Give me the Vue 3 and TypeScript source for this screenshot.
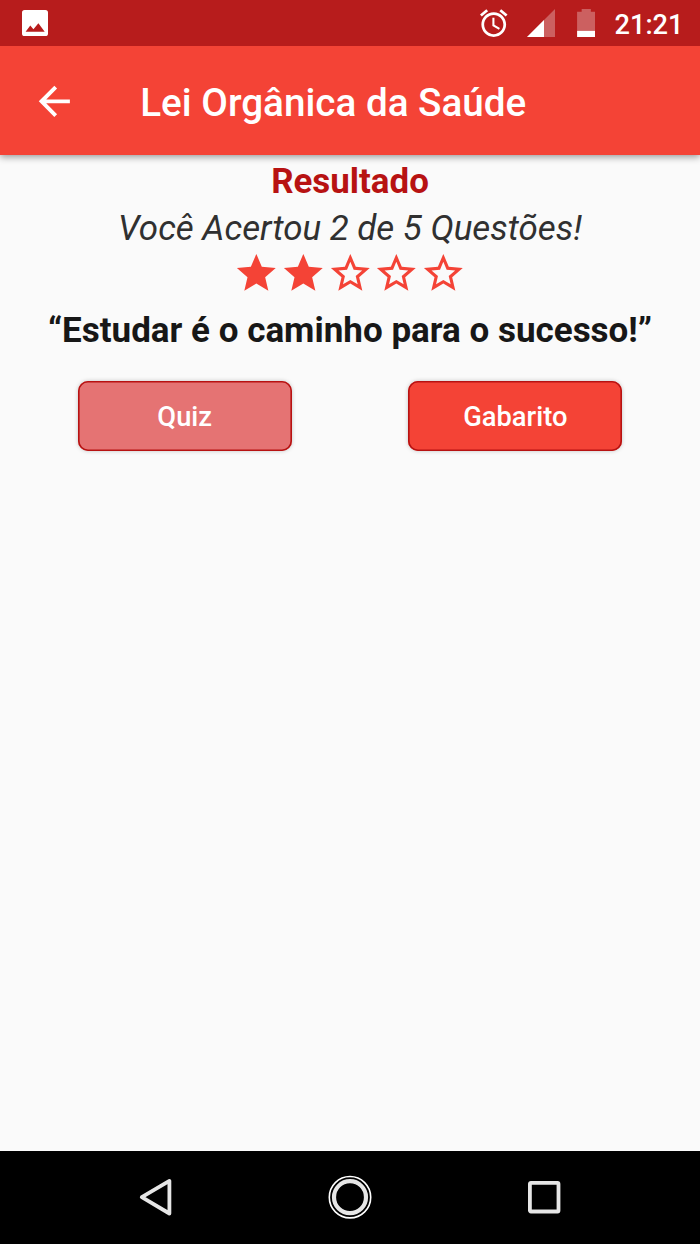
<script setup lang="ts">
const total = 5
const correct = 2
const stars: boolean[] = Array.from({ length: total }, (_, i) => i < correct)
</script>

<template>
  <div class="screen">
    <header class="status">
      <svg class="picture" viewBox="0 0 26 26">
        <rect width="26" height="26" rx="2.6" fill="#fff" />
        <path d="M3.6 21.8L8.3 15.6L11.4 19.2L16.4 13.2L22.7 21.8Z" fill="#b71c1c" />
      </svg>
      <div class="status-right">
        <svg class="alarm" viewBox="2 1.8 20 20.2">
          <path fill="#fff" d="M22 5.72l-4.6-3.86-1.29 1.53 4.6 3.86L22 5.72zM7.88 3.39L6.6 1.86 2 5.71l1.29 1.53 4.59-3.85zM12.5 8H11v6l4.75 2.85.75-1.23-4-2.37V8zM12 4c-4.97 0-9 4.03-9 9s4.02 9 9 9c4.97 0 9-4.03 9-9s-4.03-9-9-9zm0 16c-3.87 0-7-3.13-7-7s3.13-7 7-7 7 3.13 7 7-3.13 7-7 7z" />
        </svg>
        <svg class="signal" viewBox="0 0 28 28">
          <path d="M0 28L28 0V28Z" fill="#fff" fill-opacity=".3" />
          <path d="M0 28L17 11V28Z" fill="#fff" />
        </svg>
        <svg class="battery" viewBox="0 0 18 28">
          <path d="M0 2.6H4.5V0H13.5V2.6H18V21.5H0Z" fill="#fff" fill-opacity=".3" />
          <path d="M0 21.5H18V28H0Z" fill="#fff" />
        </svg>
        <span class="clock">21:21</span>
      </div>
    </header>

    <div class="appbar">
      <svg class="back" viewBox="0 0 24 24">
        <path fill="#fff" d="M20 11H7.83l5.59-5.59L12 4l-8 8 8 8 1.41-1.41L7.83 13H20v-2z" />
      </svg>
      <h1 class="title">Lei Orgânica da Saúde</h1>
    </div>

    <main class="content">
      <h2 class="result">Resultado</h2>
      <p class="score">Você Acertou {{ correct }} de {{ total }} Questões!</p>
      <div class="stars">
        <svg v-for="(full, i) in stars" :key="i" class="star" viewBox="0 0 24 24">
          <path v-if="full" fill="#f44336" d="M12 17.27L18.18 21l-1.64-7.03L22 9.24l-7.19-.61L12 2 9.19 8.63 2 9.24l5.46 4.73L5.82 21z" />
          <path v-else fill="#f44336" d="M22 9.24l-7.19-.62L12 2 9.19 8.63 2 9.24l5.46 4.73L5.82 21 12 17.27 18.18 21l-1.63-7.03L22 9.24zM12 15.4l-3.76 2.27 1-4.28-3.32-2.88 4.38-.38L12 6.1l1.71 4.04 4.38.38-3.32 2.88 1 4.28L12 15.4z" />
        </svg>
      </div>
      <p class="quote">“Estudar é o caminho para o sucesso!”</p>
      <div class="actions">
        <button class="btn muted" type="button">Quiz</button>
        <button class="btn" type="button">Gabarito</button>
      </div>
    </main>

    <nav class="navbar">
      <svg class="nav-icon" viewBox="0 0 46 46">
        <path d="M8.8 23.2L36.4 6.9V39.5Z" fill="none" stroke="#e6e6e6" stroke-width="3.8" stroke-linejoin="round" />
      </svg>
      <svg class="nav-icon" viewBox="0 0 46 46">
        <circle cx="23" cy="23.2" r="20.7" fill="none" stroke="#fff" stroke-width="1.6" />
        <circle cx="23" cy="23.2" r="16" fill="none" stroke="#e6e6e6" stroke-width="4.2" />
      </svg>
      <svg class="nav-icon" viewBox="0 0 46 46">
        <rect x="8.9" y="8.9" width="28.6" height="28.6" rx="1" fill="none" stroke="#e6e6e6" stroke-width="3.8" />
      </svg>
    </nav>
  </div>
</template>

<style>
body {
  margin: 0;
}
</style>

<style scoped>
.screen {
  width: 700px;
  height: 1244px;
  display: flex;
  flex-direction: column;
  overflow: hidden;
  background: #fafafa;
  font-family: Roboto, "Liberation Sans", sans-serif;
}
h1, h2, p {
  margin: 0;
}
svg {
  display: block;
  flex: none;
}
.status {
  position: relative;
  z-index: 1;
  height: 46.4px;
  flex: none;
  display: flex;
  justify-content: space-between;
  align-items: center;
  box-sizing: border-box;
  padding: 0 16.5px 0 22px;
  background: #b71c1c;
}
.picture {
  width: 26px;
  height: 26px;
}
.status-right {
  display: flex;
  align-items: center;
}
.alarm {
  width: 27.5px;
  height: 28px;
  margin-right: 19px;
}
.signal {
  width: 28px;
  height: 28px;
  margin-right: 22px;
}
.battery {
  width: 18.5px;
  height: 28.5px;
  margin-right: 19.5px;
}
.clock {
  color: #fff;
  font-size: 27.2px;
  font-weight: 500;
  line-height: 44px;
  padding-top: 3px;
}
.appbar {
  position: relative;
  height: 109px;
  flex: none;
  display: flex;
  align-items: center;
  box-sizing: border-box;
  padding-left: 31.1px;
  background: #f44336;
  box-shadow: 0 2px 7px rgba(0, 0, 0, 0.4);
}
.back {
  width: 46.67px;
  height: 46.67px;
  margin-right: 62.5px;
}
.title {
  color: #fff;
  font-size: 38.65px;
  font-weight: 500;
  line-height: 46px;
  white-space: nowrap;
  padding-top: 4px;
}
.content {
  flex: 1;
  display: flex;
  flex-direction: column;
  align-items: center;
  white-space: nowrap;
}
.result {
  margin-top: 6px;
  color: #b71212;
  font-size: 34.9px;
  font-weight: 700;
  line-height: 42px;
}
.score {
  margin-top: 5px;
  color: #303030;
  font-size: 34.9px;
  font-style: italic;
  font-weight: 400;
  line-height: 42px;
}
.stars {
  display: flex;
  margin-top: -0.2px;
}
.star {
  width: 46.67px;
  height: 46.67px;
}
.quote {
  margin-top: 13px;
  color: #171717;
  font-size: 35px;
  font-weight: 700;
  line-height: 42px;
}
.actions {
  display: flex;
  gap: 116.7px;
  margin-top: 29px;
}
.btn {
  width: 213.9px;
  height: 70px;
  box-sizing: border-box;
  padding: 3px 0 0;
  border: 0;
  border-radius: 10px;
  background: #f44336;
  color: #fff;
  font-family: inherit;
  font-size: 27.3px;
  font-weight: 500;
  box-shadow: inset 0 0 0 1.6px #b71212, 0 0 4px rgba(0, 0, 0, 0.22);
}
.btn.muted {
  background: #e57373;
}
.navbar {
  height: 93.3px;
  flex: none;
  display: flex;
  justify-content: center;
  align-items: center;
  gap: 148.4px;
  background: #000;
}
.nav-icon {
  width: 46px;
  height: 46px;
}
</style>
